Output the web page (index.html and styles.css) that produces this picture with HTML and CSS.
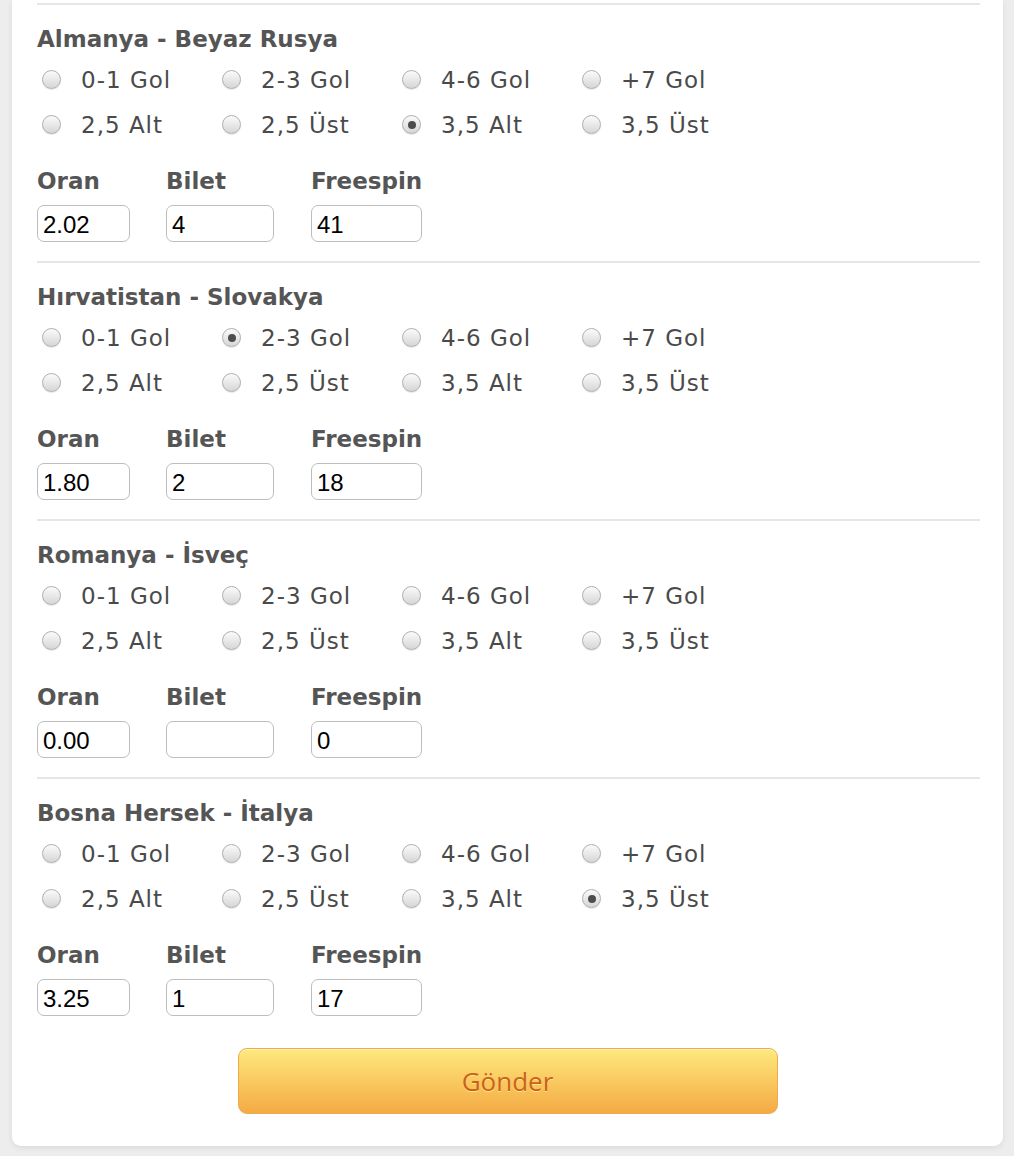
FILE: index.html
```html
<!DOCTYPE html>
<html lang="tr">
<head>
    <meta charset="UTF-8">
    <meta name="viewport" content="width=device-width, initial-scale=1.0">
    <title>Kupon</title>
    <link rel="stylesheet" href="styles.css">
</head>
<body>
    <form class="card">
        <div class="match">
            <h3>Almanya - Beyaz Rusya</h3>
            <div class="options">
                <label class="opt"><input type="radio" name="m1"> 0-1 Gol</label>
                <label class="opt"><input type="radio" name="m1"> 2-3 Gol</label>
                <label class="opt"><input type="radio" name="m1"> 4-6 Gol</label>
                <label class="opt"><input type="radio" name="m1"> +7 Gol</label>
                <label class="opt"><input type="radio" name="m1"> 2,5 Alt</label>
                <label class="opt"><input type="radio" name="m1"> 2,5 Üst</label>
                <label class="opt"><input type="radio" name="m1" checked> 3,5 Alt</label>
                <label class="opt"><input type="radio" name="m1"> 3,5 Üst</label>
            </div>
            <div class="fields">
                <div class="field oran"><span>Oran</span><input type="text" value="2.02"></div>
                <div class="field bilet"><span>Bilet</span><input type="text" value="4"></div>
                <div class="field spin"><span>Freespin</span><input type="text" value="41"></div>
            </div>
        </div>

        <div class="match">
            <h3>Hırvatistan - Slovakya</h3>
            <div class="options">
                <label class="opt"><input type="radio" name="m2"> 0-1 Gol</label>
                <label class="opt"><input type="radio" name="m2" checked> 2-3 Gol</label>
                <label class="opt"><input type="radio" name="m2"> 4-6 Gol</label>
                <label class="opt"><input type="radio" name="m2"> +7 Gol</label>
                <label class="opt"><input type="radio" name="m2"> 2,5 Alt</label>
                <label class="opt"><input type="radio" name="m2"> 2,5 Üst</label>
                <label class="opt"><input type="radio" name="m2"> 3,5 Alt</label>
                <label class="opt"><input type="radio" name="m2"> 3,5 Üst</label>
            </div>
            <div class="fields">
                <div class="field oran"><span>Oran</span><input type="text" value="1.80"></div>
                <div class="field bilet"><span>Bilet</span><input type="text" value="2"></div>
                <div class="field spin"><span>Freespin</span><input type="text" value="18"></div>
            </div>
        </div>

        <div class="match">
            <h3>Romanya - İsveç</h3>
            <div class="options">
                <label class="opt"><input type="radio" name="m3"> 0-1 Gol</label>
                <label class="opt"><input type="radio" name="m3"> 2-3 Gol</label>
                <label class="opt"><input type="radio" name="m3"> 4-6 Gol</label>
                <label class="opt"><input type="radio" name="m3"> +7 Gol</label>
                <label class="opt"><input type="radio" name="m3"> 2,5 Alt</label>
                <label class="opt"><input type="radio" name="m3"> 2,5 Üst</label>
                <label class="opt"><input type="radio" name="m3"> 3,5 Alt</label>
                <label class="opt"><input type="radio" name="m3"> 3,5 Üst</label>
            </div>
            <div class="fields">
                <div class="field oran"><span>Oran</span><input type="text" value="0.00"></div>
                <div class="field bilet"><span>Bilet</span><input type="text" value=""></div>
                <div class="field spin"><span>Freespin</span><input type="text" value="0"></div>
            </div>
        </div>

        <div class="match">
            <h3>Bosna Hersek - İtalya</h3>
            <div class="options">
                <label class="opt"><input type="radio" name="m4"> 0-1 Gol</label>
                <label class="opt"><input type="radio" name="m4"> 2-3 Gol</label>
                <label class="opt"><input type="radio" name="m4"> 4-6 Gol</label>
                <label class="opt"><input type="radio" name="m4"> +7 Gol</label>
                <label class="opt"><input type="radio" name="m4"> 2,5 Alt</label>
                <label class="opt"><input type="radio" name="m4"> 2,5 Üst</label>
                <label class="opt"><input type="radio" name="m4"> 3,5 Alt</label>
                <label class="opt"><input type="radio" name="m4" checked> 3,5 Üst</label>
            </div>
            <div class="fields">
                <div class="field oran"><span>Oran</span><input type="text" value="3.25"></div>
                <div class="field bilet"><span>Bilet</span><input type="text" value="1"></div>
                <div class="field spin"><span>Freespin</span><input type="text" value="17"></div>
            </div>
        </div>

        <div class="actions">
            <button type="submit" class="send">Gönder</button>
        </div>
    </form>
</body>
</html>
```

FILE: styles.css
```css
body {
    margin: 0;
    padding: 0 11px 11px 12px;
    background: #ededed;
    font-family: 'DejaVu Sans', sans-serif;
    color: #4a4a4a;
}
.card {
    background: white;
    border-radius: 0 0 9px 9px;
    padding: 1px 23px 32px 25px;
    box-shadow: 0 2px 6px rgba(0,0,0,0.08);
}
.match {
    border-top: 2px solid #e6e6e6;
    padding: 20px 0 19px;
}
.match:first-child {
    margin-top: 2px;
}
h3 {
    margin: 0;
    font-size: 23px;
    line-height: 28px;
    font-weight: bold;
    color: #555;
}
.options {
    display: grid;
    grid-template-columns: repeat(4, 180px);
    grid-auto-rows: 45px;
    margin-top: 4px;
}
.opt {
    display: flex;
    align-items: center;
    font-size: 23px;
    letter-spacing: 1px;
    color: #4a4a4a;
}
.opt input {
    appearance: none;
    -webkit-appearance: none;
    width: 19px;
    height: 19px;
    margin: 0 20px 0 5px;
    border-radius: 50%;
    border: 1px solid #b0b0b0;
    background: linear-gradient(#fbfbfb, #d6d6d6);
    box-shadow: 0 1px 1px rgba(0,0,0,0.1);
    display: flex;
    align-items: center;
    justify-content: center;
}
.opt input:checked::after {
    content: "";
    width: 8px;
    height: 8px;
    border-radius: 50%;
    background: #4d4d4d;
}
.fields {
    display: flex;
    margin-top: 20px;
}
.field span {
    display: block;
    font-size: 23px;
    line-height: 28px;
    font-weight: bold;
    color: #555;
    margin-bottom: 10px;
}
.field input {
    display: block;
    box-sizing: border-box;
    height: 37px;
    border: 1px solid #bdbdbd;
    border-radius: 7px;
    padding: 2px 5px 0;
    font-family: 'Liberation Sans', Arial, sans-serif;
    font-size: 24px;
    color: #000;
    outline: none;
}
.oran input { width: 93px; }
.bilet input { width: 108px; }
.spin input { width: 111px; }
.oran { margin-right: 36px; }
.bilet { margin-right: 37px; }
.actions {
    display: flex;
    justify-content: center;
    padding-top: 13px;
}
.send {
    width: 540px;
    height: 66px;
    margin-right: 2px;
    border: 1px solid #f0aa4c;
    border-radius: 9px;
    background: linear-gradient(#fee97d, #f4aa44);
    box-shadow: inset 0 1px 0 rgba(255,255,255,0.5);
    font-family: 'Open Sans', sans-serif;
    font-size: 26px;
    color: #c9621f;
    text-shadow: 0 1px 0 #fde77a;
    cursor: pointer;
}
```
